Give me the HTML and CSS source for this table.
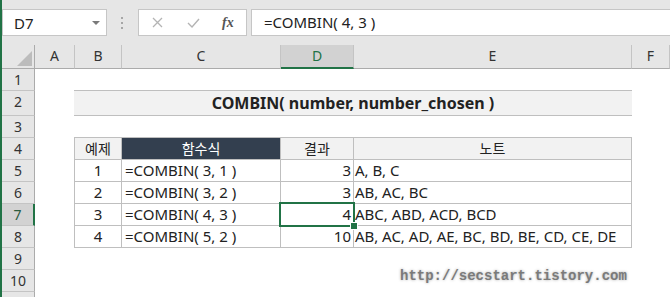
FILE: index.html
```html
<!DOCTYPE html>
<html lang="ko">

<head>
    <meta charset="UTF-8">
    <title>COMBIN</title>
    <link rel="stylesheet" href="styles.css">
</head>

<body>
    <div class="window">
        <div class="toolbar">
            <div class="namebox">
                <span>D7</span>
                <svg class="drop" width="8" height="4" viewBox="0 0 8 4"><polygon points="0,0 8,0 4,4" fill="#7a7a7a"/></svg>
            </div>
            <div class="grip">
                <svg width="3" height="12" viewBox="0 0 3 12">
                    <rect x="0" y="0" width="2" height="2" fill="#a6a6a6"/>
                    <rect x="0" y="5" width="2" height="2" fill="#a6a6a6"/>
                    <rect x="0" y="10" width="2" height="2" fill="#a6a6a6"/>
                </svg>
            </div>
            <div class="fnbox">
                <svg width="11" height="11" viewBox="0 0 11 11"><path d="M1 1 L10 10 M10 1 L1 10" stroke="#b4b4b4" stroke-width="1.3" fill="none"/></svg>
                <svg width="13" height="10" viewBox="0 0 13 10"><path d="M1 5 L5 9 L12 1" stroke="#b4b4b4" stroke-width="1.4" fill="none"/></svg>
                <span class="fx">fx</span>
            </div>
            <div class="formula">=COMBIN( 4, 3 )</div>
        </div>

        <div class="sheet">
            <div class="corner">
                <svg width="15" height="15" viewBox="0 0 15 15"><polygon points="15,0 15,15 0,15" fill="#bcbcbc"/></svg>
            </div>
            <div class="colhead">A</div>
            <div class="colhead">B</div>
            <div class="colhead">C</div>
            <div class="colhead active">D</div>
            <div class="colhead">E</div>
            <div class="colhead">F</div>

            <div class="rowhead">1</div>
            <div class="rowhead">2</div>
            <div class="rowhead">3</div>
            <div class="rowhead">4</div>
            <div class="rowhead">5</div>
            <div class="rowhead">6</div>
            <div class="rowhead active">7</div>
            <div class="rowhead">8</div>
            <div class="rowhead">9</div>
            <div class="rowhead">10</div>
            <div class="rowhead"></div>

            <div class="title">COMBIN( number, number_chosen )</div>

            <div class="examples">
                <div class="th">예제</div>
                <div class="th dark">함수식</div>
                <div class="th">결과</div>
                <div class="th">노트</div>

                <div class="num">1</div>
                <div class="fn">=COMBIN( 3, 1 )</div>
                <div class="res">3</div>
                <div class="note">A, B, C</div>

                <div class="num">2</div>
                <div class="fn">=COMBIN( 3, 2 )</div>
                <div class="res">3</div>
                <div class="note">AB, AC, BC</div>

                <div class="num">3</div>
                <div class="fn">=COMBIN( 4, 3 )</div>
                <div class="res selected">4</div>
                <div class="note">ABC, ABD, ACD, BCD</div>

                <div class="num">4</div>
                <div class="fn">=COMBIN( 5, 2 )</div>
                <div class="res">10</div>
                <div class="note">AB, AC, AD, AE, BC, BD, BE, CD, CE, DE</div>
            </div>
        </div>

        <div class="watermark">http://secstart.tistory.com</div>
    </div>
</body>

</html>
```

FILE: styles.css
```css
* {
    margin: 0;
    box-sizing: border-box;
}

body {
    width: 670px;
    height: 297px;
    overflow: hidden;
    background: white;
    font-family: "Noto Sans", "Noto Sans CJK KR", sans-serif;
    color: #222;
}

.window {
    position: relative;
    height: 297px;
    border-left: 2px solid #217346;
    overflow: hidden;
}

/* formula bar */

.toolbar {
    height: 45px;
    background: #e6e6e6;
    display: flex;
    padding-top: 9px;
}

.namebox {
    width: 105px;
    height: 27px;
    background: white;
    border: 1px solid #c6c6c6;
    display: flex;
    align-items: center;
    justify-content: space-between;
    padding: 0 6px 0 11px;
    font-size: 15px;
}

.grip {
    width: 31px;
    display: flex;
    justify-content: center;
    align-items: center;
    height: 27px;
}

.fnbox {
    width: 109px;
    height: 27px;
    background: white;
    border: 1px solid #c6c6c6;
    display: flex;
    align-items: center;
    padding-left: 13px;
    gap: 24px;
}

.fx {
    font-family: "Liberation Serif", serif;
    font-style: italic;
    font-weight: bold;
    font-size: 14px;
    color: #555;
    margin-left: -2px;
}

.formula {
    flex: 1;
    height: 27px;
    margin-left: 4px;
    margin-right: -2px;
    background: white;
    border: 1px solid #c6c6c6;
    padding-left: 12px;
    font-size: 15px;
    line-height: 25px;
}

/* grid */

.sheet {
    display: grid;
    grid-template-columns: 33px 40px 47px 159px 73px 278px 1fr;
    grid-template-rows: 24px 22px 25px 22px repeat(8, 22px);
}

.corner {
    background: #e6e6e6;
    border-right: 1px solid #ababab;
    border-bottom: 1px solid #ababab;
    display: flex;
    align-items: flex-end;
    justify-content: flex-end;
    padding: 0 2px 2px 0;
}

.colhead {
    background: #e6e6e6;
    border-right: 1px solid #c4c4c4;
    border-bottom: 1px solid #ababab;
    text-align: center;
    font-size: 14px;
    line-height: 22px;
    color: #333;
}

.colhead.active {
    background: #d2d2d2;
    border-bottom: 2px solid #217346;
    color: #217346;
}

.rowhead {
    grid-column: 1;
    background: #e6e6e6;
    border-right: 1px solid #ababab;
    border-bottom: 1px solid #c4c4c4;
    text-align: center;
    font-size: 14px;
    line-height: 21px;
    color: #333;
}

.rowhead.active {
    background: #d2d2d2;
    border-right: 2px solid #217346;
    color: #2b5b3e;
}

.title {
    grid-column: 3 / 7;
    grid-row: 3;
    margin: -1px 0 0 -1px;
    height: 26px;
    background: #f2f2f2;
    border-top: 1px solid #bfbfbf;
    border-bottom: 1px solid #bfbfbf;
    text-align: center;
    font-weight: bold;
    font-size: 16px;
    line-height: 24px;
}

.examples {
    grid-column: 3 / 7;
    grid-row: 5 / 10;
    margin: -1px 0 0 -1px;
    align-self: start;
    display: grid;
    grid-template-columns: 46px 158px 72px 277px;
    grid-auto-rows: 21px;
    gap: 1px;
    padding: 1px;
    background: #bfbfbf;
    width: 558px;
    font-size: 15px;
    line-height: 21px;
}

.examples div {
    background: white;
    white-space: nowrap;
}

.th {
    text-align: center;
    font-size: 14px;
}

.examples .th {
    background: #f2f2f2;
}

.examples .th.dark {
    background: #333f4f;
    color: white;
}

.num {
    text-align: center;
}

.fn {
    padding-left: 3px;
}

.res {
    text-align: right;
    padding-right: 2px;
}

.note {
    padding-left: 1px;
}

.selected {
    position: relative;
    outline: 2px solid #217346;
}

.selected::after {
    content: "";
    position: absolute;
    right: -5px;
    bottom: -5px;
    width: 6px;
    height: 6px;
    background: #217346;
    border: 1px solid white;
}

.watermark {
    position: absolute;
    left: 398px;
    top: 268px;
    font-family: "Liberation Mono", monospace;
    font-weight: bold;
    font-size: 14px;
    color: #7a7a7a;
    text-shadow: 0 0 3px rgba(0, 0, 0, 0.35);
}
```
